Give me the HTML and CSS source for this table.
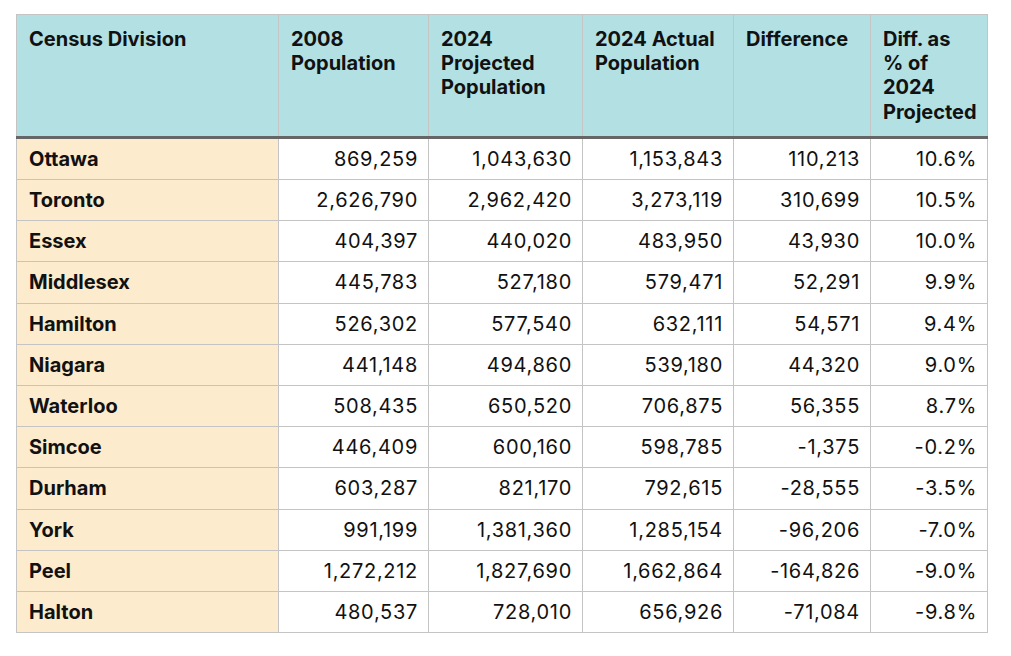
FILE: index.html
```html
<!DOCTYPE html>
<html lang="en">
<head>
<meta charset="utf-8">
<title>Census Division Population</title>
<link rel="stylesheet" href="styles.css">
</head>
<body>
<main class="page">
<table class="pop-table">
<colgroup>
<col class="c-name"><col class="c-2008"><col class="c-proj"><col class="c-act"><col class="c-diff"><col class="c-pct">
</colgroup>
<thead>
<tr>
<th>Census Division</th>
<th>2008 Population</th>
<th>2024 Projected Population</th>
<th>2024 Actual Population</th>
<th>Difference</th>
<th>Diff. as % of 2024 Projected</th>
</tr>
</thead>
<tbody>
<tr><th>Ottawa</th><td>869,259</td><td>1,043,630</td><td>1,153,843</td><td>110,213</td><td>10.6%</td></tr>
<tr><th>Toronto</th><td>2,626,790</td><td>2,962,420</td><td>3,273,119</td><td>310,699</td><td>10.5%</td></tr>
<tr><th>Essex</th><td>404,397</td><td>440,020</td><td>483,950</td><td>43,930</td><td>10.0%</td></tr>
<tr><th>Middlesex</th><td>445,783</td><td>527,180</td><td>579,471</td><td>52,291</td><td>9.9%</td></tr>
<tr><th>Hamilton</th><td>526,302</td><td>577,540</td><td>632,111</td><td>54,571</td><td>9.4%</td></tr>
<tr><th>Niagara</th><td>441,148</td><td>494,860</td><td>539,180</td><td>44,320</td><td>9.0%</td></tr>
<tr><th>Waterloo</th><td>508,435</td><td>650,520</td><td>706,875</td><td>56,355</td><td>8.7%</td></tr>
<tr><th>Simcoe</th><td>446,409</td><td>600,160</td><td>598,785</td><td>-1,375</td><td>-0.2%</td></tr>
<tr><th>Durham</th><td>603,287</td><td>821,170</td><td>792,615</td><td>-28,555</td><td>-3.5%</td></tr>
<tr><th>York</th><td>991,199</td><td>1,381,360</td><td>1,285,154</td><td>-96,206</td><td>-7.0%</td></tr>
<tr><th>Peel</th><td>1,272,212</td><td>1,827,690</td><td>1,662,864</td><td>-164,826</td><td>-9.0%</td></tr>
<tr><th>Halton</th><td>480,537</td><td>728,010</td><td>656,926</td><td>-71,084</td><td>-9.8%</td></tr>
</tbody>
</table>
</main>
</body>
</html>
```
FILE: styles.css
```css
html, body {
  margin: 0;
  padding: 0;
  background: #ffffff;
}
body {
  font-family: Inter, "Liberation Sans", sans-serif;
  color: #111111;
}
.page {
  padding: 14px 0 0 16px;
}
.pop-table {
  border-collapse: collapse;
  table-layout: fixed;
  width: 971px;
  font-size: 20px;
  line-height: 24.2px;
}
.c-name { width: 262px; }
.c-2008 { width: 150px; }
.c-proj { width: 154px; }
.c-act { width: 151px; }
.c-diff { width: 137px; }
.c-pct { width: 117px; }

.pop-table th,
.pop-table td {
  border: 1px solid #c4c4c4;
}
.pop-table thead th {
  background: #b2e0e3;
  text-align: left;
  vertical-align: top;
  font-weight: 700;
  padding: 12px 12px 12px 12px;
  border-bottom: 3px solid #666666;
}
.pop-table tbody th {
  background: #fcebcd;
  text-align: left;
  font-weight: 700;
  padding: 8px 12px;
}
.pop-table tbody td {
  text-align: right;
  font-weight: 400;
  letter-spacing: 0.7px;
  padding: 8px 10px 8px 12px;
}
```
